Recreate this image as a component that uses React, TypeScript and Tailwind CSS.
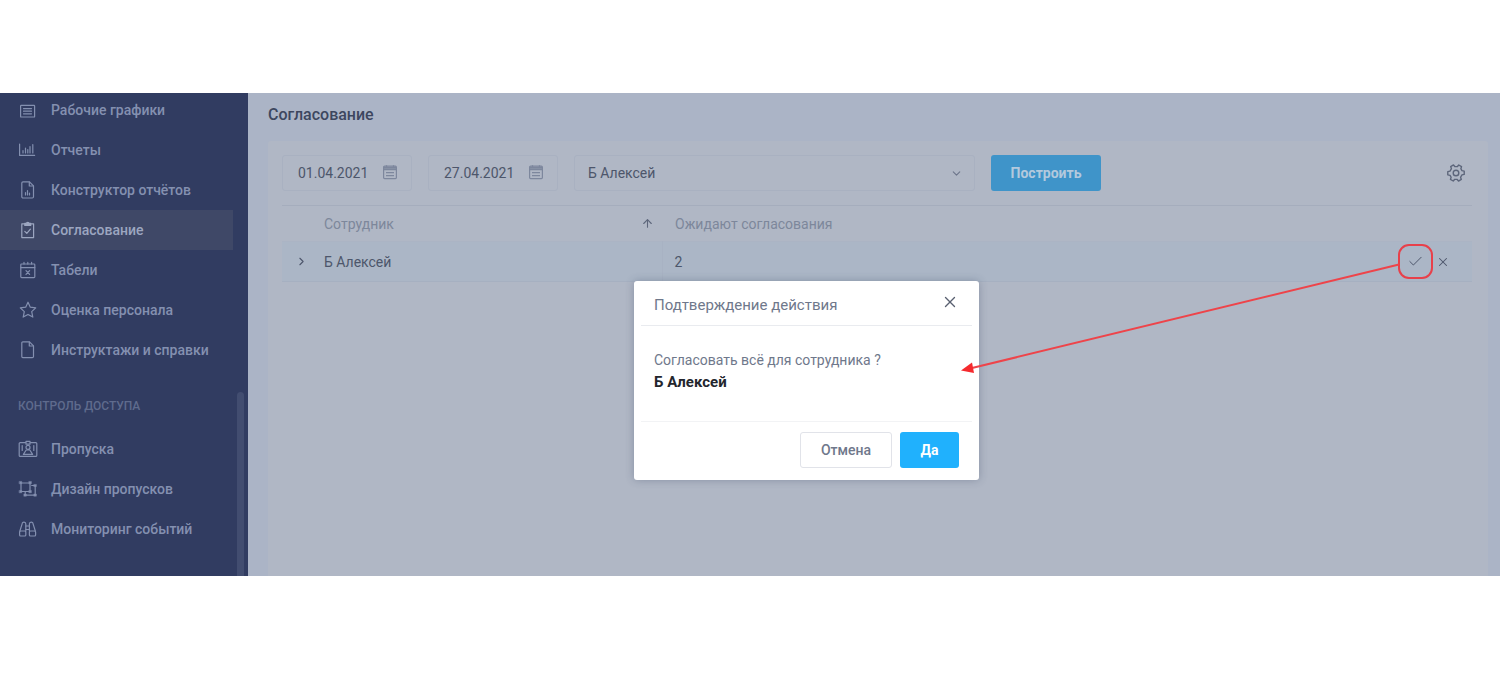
import type { ReactNode } from "react";
import clsx from "clsx";
import { ArrowUp, Check, ChevronDown, ChevronRight, X } from "lucide-react";

type NavItem = {
  label: string;
  icon: ReactNode;
  active?: boolean;
};

function Icon({ children }: { children: ReactNode }) {
  return (
    <svg
      viewBox="0 0 20 20"
      width={20}
      height={20}
      fill="none"
      stroke="currentColor"
      strokeWidth={1.2}
      strokeLinejoin="round"
      strokeLinecap="round"
      className="shrink-0"
      aria-hidden="true"
    >
      {children}
    </svg>
  );
}

const mainItems: NavItem[] = [
  {
    label: "Рабочие графики",
    icon: (
      <Icon>
        <rect x="2.6" y="5.4" width="14" height="11.6" rx="0.6" />
        <path d="M5.5 8.6h8M5.5 11.2h8M5.5 13.8h8" />
      </Icon>
    ),
  },
  {
    label: "Отчеты",
    icon: (
      <Icon>
        <path d="M1.6 4v11.4h15M5 13v-2.5M7.5 13V8M9.8 13V9.5M12 13V6.5M14.8 13V4.5" />
      </Icon>
    ),
  },
  {
    label: "Конструктор отчётов",
    icon: (
      <Icon>
        <path d="M5 1.8h6.5l4 4v11a1.2 1.2 0 0 1-1.2 1.2H5a1.2 1.2 0 0 1-1.2-1.2V3A1.2 1.2 0 0 1 5 1.8z" />
        <path d="M11.3 2v4h4M7.5 15v-2.5M9.5 15v-4.5M11.5 15v-2" />
      </Icon>
    ),
  },
  {
    label: "Согласование",
    active: true,
    icon: (
      <Icon>
        <path d="M6.5 3.8H3.8v13.8h11.8V3.8h-2.7" />
        <path
          d="M6.8 5.4V3.4h1.5a1.5 1.5 0 0 1 2.9 0h1.5v2z"
          fill="currentColor"
        />
        <path d="M6.8 11.3l2 2 3.6-4.2" />
      </Icon>
    ),
  },
  {
    label: "Табели",
    icon: (
      <Icon>
        <rect x="2.8" y="4" width="14" height="13.6" rx="0.8" />
        <path d="M2.8 7.6h14M6 4V2.4M9.8 4V2.4M13.6 4V2.4M8 10.6l3.6 3.8M11.6 10.6L8 14.4" />
      </Icon>
    ),
  },
  {
    label: "Оценка персонала",
    icon: (
      <Icon>
        <path d="M10 2.2l2.3 5 5.4.7-4 3.7 1.1 5.5-4.8-2.7-4.8 2.7 1.1-5.5-4-3.7 5.4-.7z" />
      </Icon>
    ),
  },
  {
    label: "Инструктажи и справки",
    icon: (
      <Icon>
        <path d="M4.8 1.8h6.7l4 4v10.6a1.2 1.2 0 0 1-1.2 1.2H4.8a1 1 0 0 1-1-1V2.8a1 1 0 0 1 1-1z" />
        <path d="M11.3 2v4h4" />
      </Icon>
    ),
  },
];

const accessItems: NavItem[] = [
  {
    label: "Пропуска",
    icon: (
      <Icon>
        <path d="M7.5 3.6H2.2a1 1 0 0 0-1 1v11.8a1 1 0 0 0 1 1h15.6a1 1 0 0 0 1-1V4.6a1 1 0 0 0-1-1h-5.3" />
        <path d="M8 5.2V2.4h4v2.8z" />
        <circle cx="10" cy="8.4" r="2" />
        <path d="M5.4 15.400L8.200 11h3.600l2.800 4.400z" />
        <path d="M4.2 6.5v5M15.8 6.5v5" />
      </Icon>
    ),
  },
  {
    label: "Дизайн пропусков",
    icon: (
      <Icon>
        <path d="M3 4h9v8.5H3z" />
        <path
          d="M1.4 2.4h2.4v2.4H1.4zM11 2.4h2.4v2.4H11zM1.4 11.4h2.4v2.4H1.4zM11 11.4h2.4v2.4H11z"
          fill="currentColor"
          strokeWidth="0.4"
        />
        <path d="M7.2 12.8v3.4h10V6.5h-3.5" />
        <path
          d="M16 5.4h2.4v2.2H16zM16 15h2.4v2.2H16zM6 15h2.4v2.2H6z"
          fill="currentColor"
          strokeWidth="0.4"
        />
      </Icon>
    ),
  },
  {
    label: "Мониторинг событий",
    icon: (
      <Icon>
        <path d="M4.2 4.600L1.800 12.200M15 4.600l2.400 7.600M4.200 4.600c0-2 3.600-2 3.600.4v7M15 4.600c0-2-3.600-2-3.600.4v7" />
        <rect x="1.6" y="12" width="6.2" height="5" rx="1" />
        <rect x="11.4" y="12" width="6.2" height="5" rx="1" />
        <path d="M7.8 7h3.600M7.800 10.500h3.600" />
      </Icon>
    ),
  },
];

function NavList({ items }: { items: NavItem[] }) {
  return (
    <ul>
      {items.map((item) => (
        <li key={item.label}>
          <a
            href="#"
            aria-current={item.active ? "page" : undefined}
            className={clsx(
              "mr-[15px] flex h-10 items-center gap-[13px] pl-[18px] text-sm font-medium",
              item.active ? "bg-[#3f4867] text-[#9ca6c0]" : "text-[#8490b0]"
            )}
          >
            {item.icon}
            {item.label}
          </a>
        </li>
      ))}
    </ul>
  );
}

function Sidebar() {
  return (
    <aside className="relative w-[248px] shrink-0 overflow-hidden bg-[#313c61]">
      <nav className="-mt-[3px] pb-[27px]">
        <NavList items={mainItems} />
        <h2 className="pt-6 pb-[11px] pl-[18px] text-xs leading-6 font-medium text-[#5f6b8d] uppercase">
          Контроль доступа
        </h2>
        <NavList items={accessItems} />
      </nav>
      <div className="absolute right-1 bottom-0 h-[184px] w-[7px] rounded-t bg-[#424d70]" />
    </aside>
  );
}

function DateField({ label, value }: { label: string; value: string }) {
  return (
    <div className="flex h-9 w-[130px] items-center justify-between rounded-[3px] border border-[#a9b1c1] pr-[13px] pl-[15px]">
      <input
        type="text"
        aria-label={label}
        defaultValue={value}
        className="h-6 w-20 bg-transparent text-sm text-[#4d566b] outline-none"
      />
      <svg
        viewBox="0 0 16 16"
        width={16}
        height={16}
        fill="none"
        stroke="#7d879d"
        strokeWidth={1.2}
        aria-hidden="true"
      >
        <rect x="1.6" y="1.2" width="12.8" height="12.4" rx="1" />
        <path d="M1.6 4.6h12.8M4.5.2v2M11.5.2v2M4 7.6h8M4 10.6h8" />
        <path d="M2 2.8h12" strokeWidth="2" />
      </svg>
    </div>
  );
}

function Toolbar() {
  return (
    <div className="flex items-center gap-4 pr-1.5">
      <DateField label="Начало периода" value="01.04.2021" />
      <DateField label="Конец периода" value="27.04.2021" />
      <div className="relative w-[401px]">
        <select
          aria-label="Сотрудник"
          className="h-9 w-full appearance-none rounded-[3px] border border-[#a9b1c1] bg-transparent pl-[13px] text-sm text-[#4d566b] outline-none"
        >
          <option>Б Алексей</option>
        </select>
        <ChevronDown
          size={13}
          className="pointer-events-none absolute top-3 right-3 text-[#6c758b]"
        />
      </div>
      <button
        type="button"
        className="h-9 w-[110px] rounded-[3px] bg-[#3f94c9] text-sm font-bold text-[#b3c9dd]"
      >
        Построить
      </button>
      <button
        type="button"
        aria-label="Настройки"
        className="ml-auto text-[#5d667b]"
      >
        <svg
          viewBox="0 0 20 20"
          width={20}
          height={20}
          fill="none"
          stroke="currentColor"
          strokeWidth={1.4}
          strokeLinejoin="round"
          aria-hidden="true"
        >
          <g transform="rotate(30 10 10)">
            <path d="M8.4 1.7h3.2l.5 2.2 1.9 1.1 2.2-.7 1.6 2.8-1.7 1.5v2.8l1.7 1.5-1.6 2.8-2.2-.7-1.9 1.1-.5 2.2H8.4l-.5-2.2L6 15l-2.2.7-1.6-2.8 1.7-1.5V8.6L2.2 7.1l1.6-2.8L6 5l1.9-1.1z" />
          </g>
          <circle cx="10" cy="10" r="2.8" />
        </svg>
      </button>
    </div>
  );
}

function ApprovalTable() {
  return (
    <table className="mt-[14px] w-full table-fixed border-collapse text-left text-sm">
      <thead>
        <tr className="h-9 border-t border-b border-t-[#a5adbd] border-b-[#abb4c4] text-[#7d879b]">
          <th className="w-[42px]" aria-label="Развернуть" />
          <th className="w-[338px] p-0 font-normal">
            <span className="flex items-center justify-between pr-2">
              Сотрудник
              <ArrowUp size={13} className="text-[#5d667b]" />
            </span>
          </th>
          <th className="p-0 pl-[13px] font-normal">Ожидают согласования</th>
          <th className="w-[92px]" aria-label="Действия" />
        </tr>
      </thead>
      <tbody>
        <tr className="h-10 border-b border-[#a6b0c1] bg-[#abb6c6] text-[#4d566b]">
          <td className="p-0 pl-[13px]">
            <button type="button" aria-label="Развернуть" className="block">
              <ChevronRight size={13} />
            </button>
          </td>
          <td className="p-0">Б Алексей</td>
          <td className="border-l border-[#a8b2c3] p-0 pl-3">2</td>
          <td className="p-0">
            <div className="flex items-center gap-[3px] pl-[18px]">
              <button
                type="button"
                aria-label="Согласовать"
                className="flex h-[35px] w-[35px] items-center justify-center rounded-[11px] border-2 border-[#e8404a]"
              >
                <Check size={17} strokeWidth={1.4} />
              </button>
              <button type="button" aria-label="Отклонить">
                <X size={14} strokeWidth={1.8} />
              </button>
            </div>
          </td>
        </tr>
      </tbody>
    </table>
  );
}

function ConfirmDialog() {
  return (
    <div
      role="dialog"
      aria-labelledby="confirm-title"
      className="w-[345px] rounded-[3px] bg-white text-sm text-[#6f788b] shadow-[0_0_8px_rgba(40,55,85,0.3)]"
    >
      <header className="mx-[7px] flex h-[45px] items-center justify-between border-b border-[#e9ebef] px-[13px]">
        <h2 id="confirm-title" className="pt-1.5 text-[15px]">
          Подтверждение действия
        </h2>
        <button
          type="button"
          aria-label="Закрыть"
          className="pb-0.5 text-[#596070]"
        >
          <X size={18} strokeWidth={1.8} />
        </button>
      </header>
      <div className="px-5 pt-[23px] pb-7 leading-[22px]">
        <p>Согласовать всё для сотрудника ?</p>
        <p className="text-[15px] font-bold text-[#23262d]">Б Алексей</p>
      </div>
      <footer className="mx-[7px] flex justify-end gap-2 border-t border-[#f2f3f5] px-[13px] pt-[10px] pb-3">
        <button
          type="button"
          className="h-9 w-[92px] rounded-[3px] border border-[#e1e3e9] font-medium"
        >
          Отмена
        </button>
        <button
          type="button"
          className="h-9 w-[59px] rounded-[3px] bg-[#20b1fd] font-bold text-white"
        >
          Да
        </button>
      </footer>
    </div>
  );
}

export default function App() {
  return (
    <div className="min-h-screen bg-white py-[93px] font-[Roboto,sans-serif]">
      <div className="relative flex overflow-hidden">
        <Sidebar />
        <main className="flex min-w-0 flex-1 flex-col bg-[#abb4c6] pr-3 pl-5">
          <h1 className="py-[11px] text-base leading-[22px] font-medium text-[#3d475f]">
            Согласование
          </h1>
          <section className="mt-1 flex-1 rounded-t-[3px] bg-[#b0b7c5] pt-[14px] pr-4 pl-[14px]">
            <Toolbar />
            <ApprovalTable />
          </section>
        </main>

        <div className="pointer-events-none absolute inset-y-0 right-0 left-[113px] flex items-start justify-center pt-[188px]">
          <div className="pointer-events-auto">
            <ConfirmDialog />
          </div>
        </div>

        {/* pointer from the row action to the dialog */}
        <svg
          viewBox="0 0 440 116"
          width={440}
          height={116}
          className="pointer-events-none absolute top-[167px] right-[100px]"
          aria-hidden="true"
        >
          <path d="M439 4.5L12 108" stroke="#ee444a" strokeWidth="2" />
          <path d="M1 110.5L12 102.5L14 113z" fill="#f52a2e" />
        </svg>
      </div>
    </div>
  );
}
